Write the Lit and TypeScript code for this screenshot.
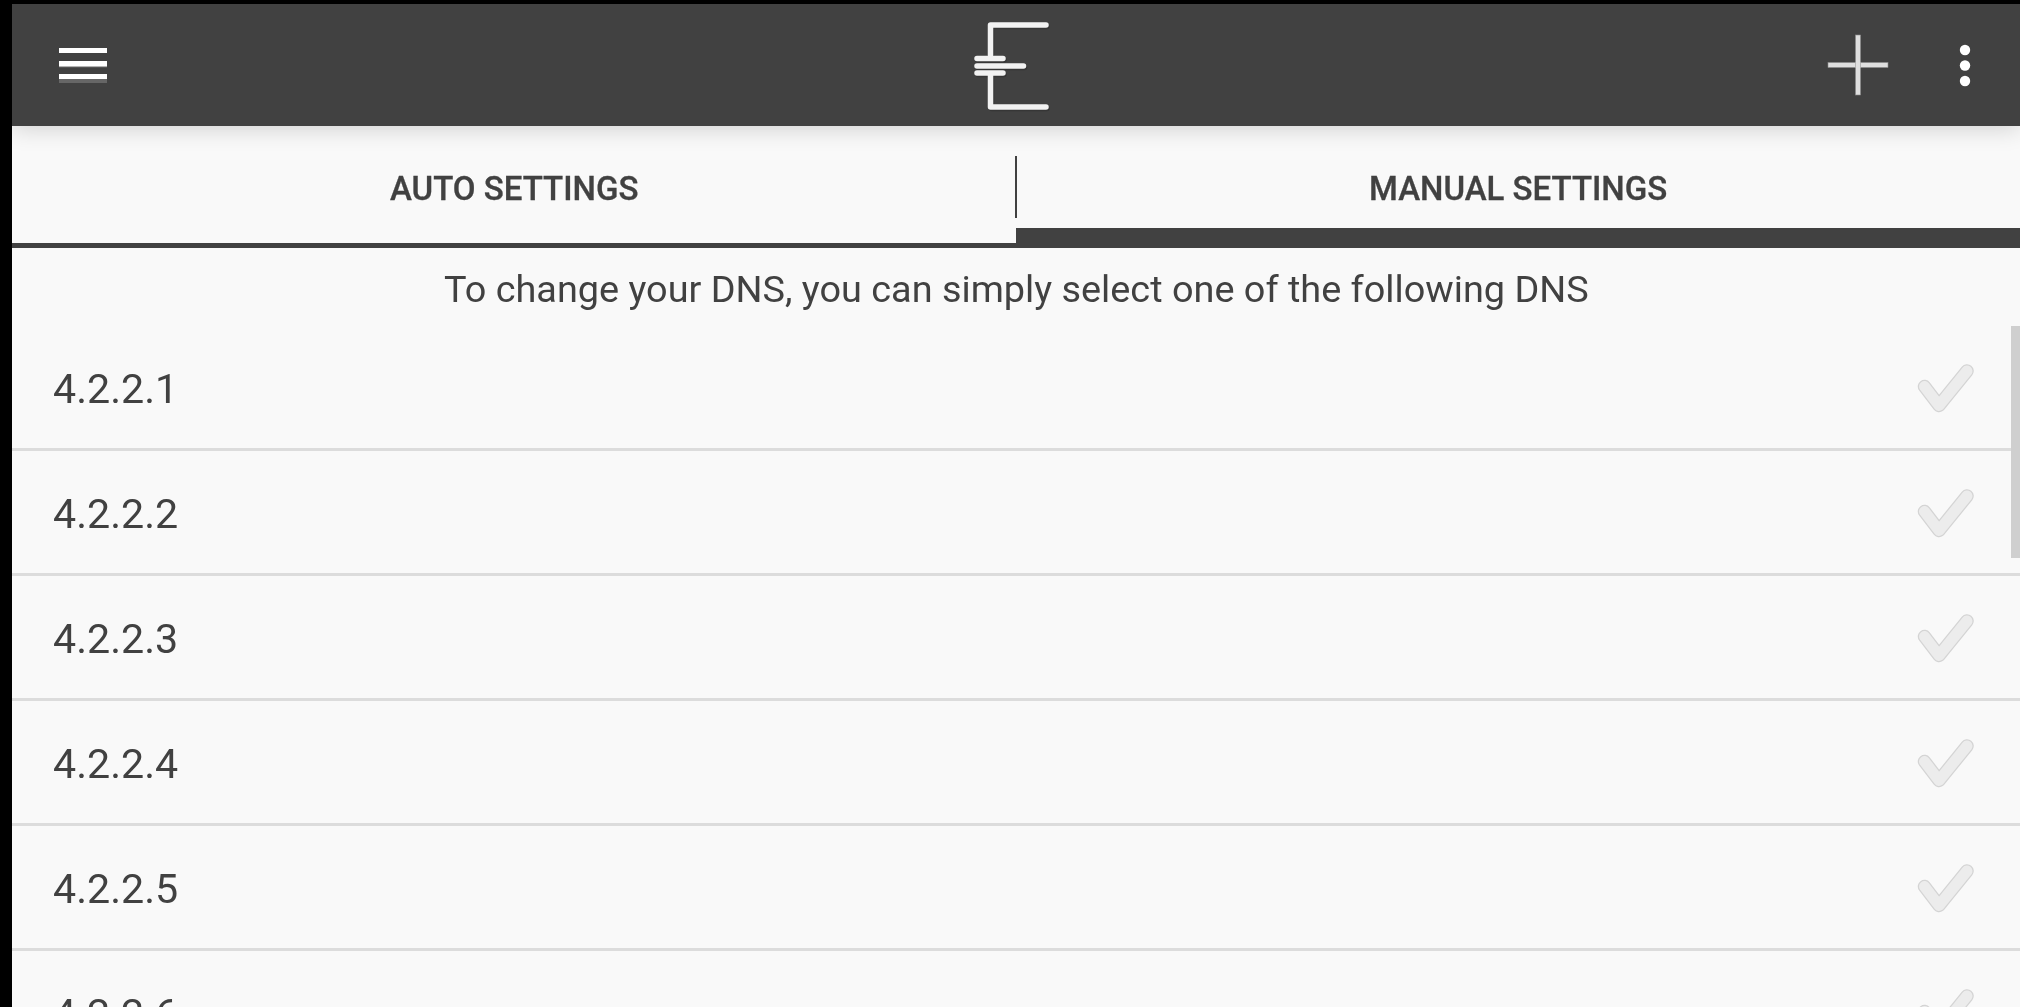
import { LitElement, html, css } from "lit";
import { customElement } from "lit/decorators.js";

const rows = ["4.2.2.1", "4.2.2.2", "4.2.2.3", "4.2.2.4", "4.2.2.5", "4.2.2.6"];

@customElement("app-root")
export class AppRoot extends LitElement {
  static styles = css`
    :host { display: block; width: 2020px; height: 1007px; overflow: hidden; background: #000; font-family: Roboto, "Liberation Sans", sans-serif; }
    .screen { margin: 4px 0 0 12px; width: 2008px; height: 1003px; background: #f9f9f9; display: flex; flex-direction: column; position: relative; overflow: hidden; }
    .header { flex: none; height: 122px; background: #414141; display: flex; align-items: flex-start; box-shadow: 0 3px 22px rgba(0,0,0,.16); position: relative; z-index: 1; }
    .menu { margin: 44px 0 0 47px; }
    .logo { margin: 13px 0 0 867px; }
    .plus { margin: 30px 0 0 773px; }
    .dots { margin: 40px 0 0 70px; }
    svg { display: block; flex: none; }
    .tabs { flex: none; height: 122px; display: flex; position: relative; }
    .tab { flex: 1; display: flex; align-items: flex-start; justify-content: center; padding-top: 43px; font-size: 33px; font-weight: 500; color: #414141; box-sizing: border-box; -webkit-text-stroke: .3px #414141; }
    .tab.auto { border-bottom: 5px solid #414141; height: 122px; }
    .tab.manual { border-bottom: 20px solid #414141; height: 122px; }
    .label { will-change: transform; }
    .divider { position: absolute; left: 1003px; top: 30px; width: 2px; height: 62px; background: #414141; }
    .intro { flex: none; height: 78px; display: flex; align-items: center; justify-content: center; font-size: 37.85px; color: #414141; padding-top: 4px; box-sizing: border-box; }
    .row { flex: none; height: 125px; box-sizing: border-box; border-bottom: 3px solid #dcdcdc; display: flex; align-items: center; justify-content: space-between; padding: 3px 45px 0 41px; font-size: 41.2px; color: #414141; }
    .scroll { position: absolute; right: 0; top: 322px; width: 9px; height: 232px; background: #cfcfcf; }
  `;

  render() {
    return html`<div class="screen">
      <div class="header">
        <svg class="menu" width="48" height="36" viewBox="0 0 48 36"><g fill="#666"><rect y="15" width="48" height="4.5"/><rect y="28" width="48" height="7"/></g><g fill="#fff"><rect width="48" height="5"/><rect y="13" width="48" height="5.5"/><rect y="26" width="48" height="5"/></g></svg>
        <svg class="logo" width="80" height="96" viewBox="0 0 80 96" fill="none" stroke-linecap="round" stroke-linejoin="round">
          <g stroke="#2c2c2c" stroke-width="5.5" transform="translate(1 1.5)" opacity=".5"><path d="M72 8H16.5V38M16.5 58V90H72M3 41.5H29M3 49H49.5M3 56H29"/></g>
          <g stroke="#f2f2f2" stroke-width="5.5"><path d="M72 8H16.5V38M16.5 58V90H72"/><path d="M3 41.5H29M3 49H49.5M3 56H29"/></g>
        </svg>
        <svg class="plus" width="62" height="62" viewBox="0 0 62 62"><g fill="#dfdfdf" stroke="#8a8a8a" stroke-width=".6"><rect x="1" y="28.5" width="60" height="5"/><rect x="28.5" y="1" width="5" height="60"/></g><rect x="28.8" y="28" width="4.4" height="6" fill="#dfdfdf"/></svg>
        <svg class="dots" width="12" height="44" viewBox="0 0 12 44"><g fill="#fff"><circle cx="6" cy="6" r="5.2"/><circle cx="6" cy="21.5" r="5.2"/><circle cx="6" cy="37" r="5.2"/></g></svg>
      </div>
      <div class="tabs">
        <div class="tab auto"><span class="label">AUTO SETTINGS</span></div>
        <div class="tab manual"><span class="label">MANUAL SETTINGS</span></div>
        <div class="divider"></div>
      </div>
      <div class="intro"><span class="label">To change your DNS, you can simply select one of the following DNS</span></div>
      ${rows.map((r) => html`<div class="row"><span class="label">${r}</span>
        <svg width="60" height="56" viewBox="0 0 60 56" fill="none" stroke-linecap="round" stroke-linejoin="round">
          <path d="M9.5 25.5L24 44.5L52 10" stroke="#d4d4d4" stroke-width="13.5"/>
          <path d="M9.5 25.5L24 44.5L52 10" stroke="#ececec" stroke-width="11"/>
        </svg></div>`)}
      <div class="scroll"></div>
    </div>`;
  }
}
